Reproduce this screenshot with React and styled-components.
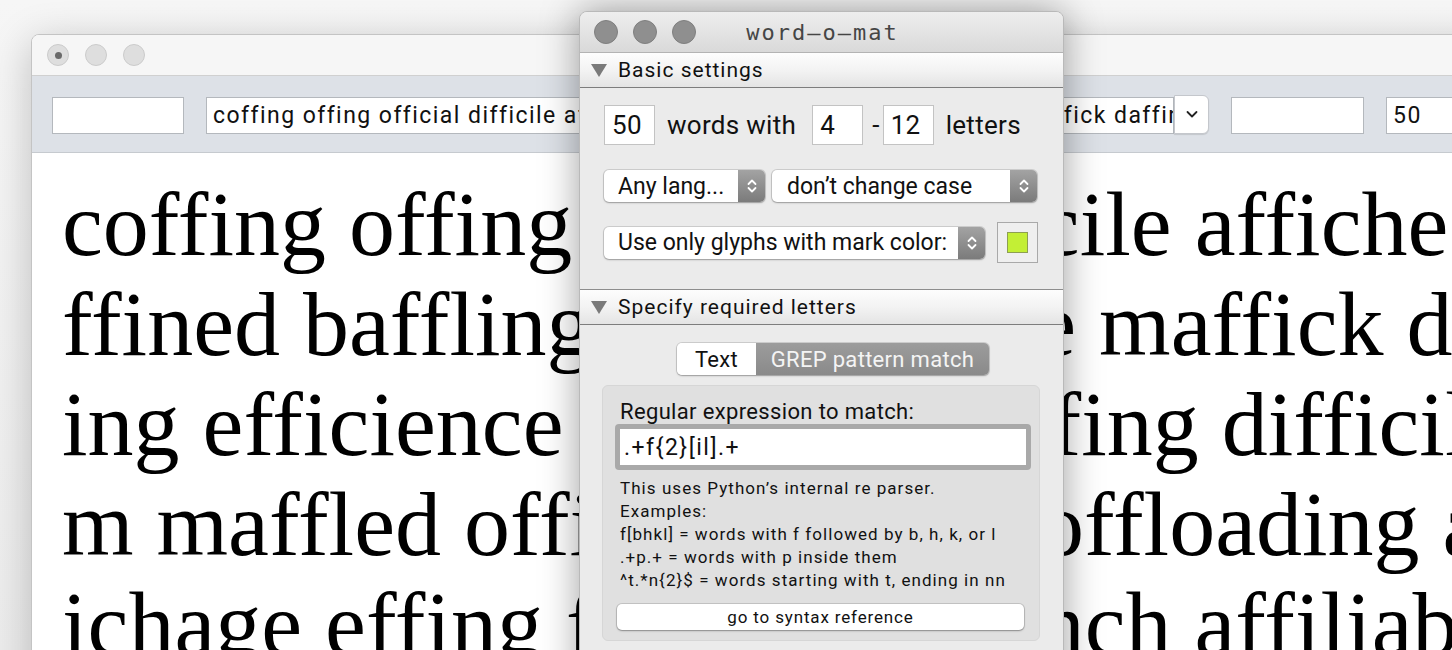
import React from "react";
import styled, { createGlobalStyle } from "styled-components";

const Global = createGlobalStyle`
  html, body {
    margin: 0;
    padding: 0;
    background: #f4f4f4;
    overflow: hidden;
  }
  #root {
    width: 1452px;
    height: 650px;
  }
`;

const uiFont = `"Roboto", "DejaVu Sans", sans-serif`;

const Desktop = styled.div`
  position: relative;
  width: 1452px;
  height: 650px;
  overflow: hidden;
  background: linear-gradient(#f6f6f6, #ececec);
`;

const MainWindow = styled.div`
  position: absolute;
  left: 31px;
  top: 34px;
  width: 1560px;
  height: 720px;
  background: #fff;
  border: 1px solid #c4c4c4;
  border-radius: 8px 8px 0 0;
  box-shadow: 0 8px 40px rgba(0, 0, 0, 0.22);
  overflow: hidden;
  display: flex;
  flex-direction: column;
`;

const TitleBar = styled.div`
  height: 41px;
  flex: none;
  background: #f6f6f6;
  display: flex;
  align-items: center;
  gap: ${(p) => p.$gap}px;
  padding-left: ${(p) => p.$pad}px;
  box-sizing: border-box;
  border-bottom: 1px solid ${(p) => p.$line};
  position: relative;
`;

const Light = styled.span`
  width: ${(p) => p.$size}px;
  height: ${(p) => p.$size}px;
  border-radius: 50%;
  background: ${(p) => p.$color};
  border: 1px solid ${(p) => p.$border};
  box-sizing: border-box;
  display: flex;
  align-items: center;
  justify-content: center;
`;

const Dot = styled.span`
  width: 7px;
  height: 7px;
  border-radius: 50%;
  background: #6a6a6a;
`;

const Toolbar = styled.div`
  height: 77px;
  flex: none;
  background: #dde1e7;
  border-bottom: 1px solid #c6cacf;
  display: flex;
  align-items: center;
  gap: 22px;
  padding: 2px 0 0 20px;
  box-sizing: border-box;
`;

const Field = styled.div`
  width: ${(p) => p.$w}px;
  height: 37px;
  flex: none;
  align-self: center;
  background: #fff;
  border: 1px solid #b4b8bd;
  box-sizing: border-box;
  font: 400 23px ${uiFont};
  letter-spacing: 1.45px;
  color: #111;
  display: flex;
  align-items: center;
  padding-left: 6px;
  white-space: nowrap;
  overflow: hidden;
`;

const Combo = styled.div`
  display: flex;
  flex: none;
  align-items: stretch;
  height: 37px;
`;

const ComboButton = styled.div`
  width: 33px;
  margin-top: -2px;
  background: #fff;
  border: 1px solid #c4c7cc;
  border-radius: 0 6px 6px 0;
  box-shadow: 0 1px 1px rgba(0, 0, 0, 0.12);
  display: flex;
  align-items: center;
  justify-content: center;
`;

const Preview = styled.div`
  padding: 21px 0 0 30px;
  font-family: "Liberation Serif", "Times New Roman", serif;
  font-size: 92px;
  line-height: 100px;
  color: #000;
`;

const Line = styled.div`
  white-space: pre;
`;

const Panel = styled.div`
  position: absolute;
  left: 579px;
  top: 11px;
  width: 483px;
  height: 700px;
  background: #ebebeb;
  border: 1px solid #b9b9b9;
  border-radius: 8px 8px 0 0;
  box-shadow: 0 0 38px rgba(0, 0, 0, 0.38);
  overflow: hidden;
  font-family: ${uiFont};
  color: #111;
`;

const PanelTitleBar = styled(TitleBar)`
  background: linear-gradient(#eeeeee, #d9d9d9);
`;

const PanelTitle = styled.div`
  position: absolute;
  left: 0;
  right: 0;
  top: 0;
  bottom: 0;
  display: flex;
  align-items: center;
  justify-content: center;
  font: 400 22px "DejaVu Sans Mono", "Liberation Mono", monospace;
  letter-spacing: 2px;
  color: #454545;
  padding-left: 2px;
`;

const SectionHeader = styled.div`
  height: 34px;
  background: linear-gradient(#fdfdfd, #f3f3f3 50%, #e4e4e4);
  border-top: ${(p) => (p.$first ? "none" : "1px solid #8d8d8d")};
  border-bottom: 1px solid #7d7d7d;
  display: flex;
  align-items: center;
  gap: 11px;
  padding-left: 11px;
  font-size: 21px;
  letter-spacing: 1px;
  color: #111;
`;

const Tri = styled.span`
  width: 0;
  height: 0;
  border-left: 8px solid transparent;
  border-right: 8px solid transparent;
  border-top: 13px solid #7a7a7a;
`;

const Section = styled.div`
  padding: ${(p) => p.$pad};
  display: flex;
  flex-direction: column;
  gap: ${(p) => p.$gap}px;
  align-items: ${(p) => p.$align || "stretch"};
`;

const Row = styled.div`
  display: flex;
  align-items: center;
  gap: ${(p) => p.$gap || 0}px;
  margin-top: ${(p) => p.$mt || 0}px;
`;

const NumBox = styled.div`
  width: 51px;
  height: 40px;
  flex: none;
  margin-left: ${(p) => p.$ml || 0}px;
  background: #fff;
  border: 1px solid #c3c3c3;
  box-sizing: border-box;
  font-size: 26px;
  letter-spacing: 0.3px;
  display: flex;
  align-items: center;
  padding-left: 7px;
`;

const Label = styled.span`
  font-size: 26px;
  letter-spacing: 0.3px;
  margin: 0 ${(p) => p.$mr || 0}px 0 ${(p) => p.$ml || 0}px;
  white-space: nowrap;
`;

const Popup = styled.div`
  width: ${(p) => p.$w}px;
  height: 32px;
  flex: none;
  background: #fff;
  border-radius: 5px;
  box-shadow: 0 0 0 1px rgba(0, 0, 0, 0.12), 0 1px 2px rgba(0, 0, 0, 0.25);
  display: flex;
  align-items: stretch;
  overflow: hidden;
  box-sizing: border-box;
`;

const PopupText = styled.div`
  flex: 1;
  display: flex;
  align-items: center;
  padding-left: ${(p) => p.$pad || 14}px;
  font-size: 23px;
  white-space: nowrap;
  overflow: hidden;
`;

const Stepper = styled.div`
  width: 27px;
  flex: none;
  background: linear-gradient(#a3a3a3, #7b7b7b);
  display: flex;
  align-items: center;
  justify-content: center;
`;

const Well = styled.div`
  width: 41px;
  height: 41px;
  border: 1px solid #a9a9a9;
  background: #efefef;
  box-sizing: border-box;
  display: flex;
  align-items: center;
  justify-content: center;
`;

const Swatch = styled.div`
  width: 21px;
  height: 21px;
  background: #c3ef35;
  border: 1px solid #8d9f52;
  box-sizing: border-box;
`;

const Segmented = styled.div`
  display: flex;
  height: 32px;
  margin-left: 24px;
  border-radius: 5px;
  overflow: hidden;
  box-shadow: 0 0 0 1px rgba(0, 0, 0, 0.12), 0 1px 2px rgba(0, 0, 0, 0.25);
`;

const Segment = styled.div`
  width: ${(p) => p.$w}px;
  display: flex;
  align-items: center;
  justify-content: center;
  font-size: 22px;
  letter-spacing: 0.3px;
  white-space: nowrap;
  color: ${(p) => (p.$on ? "#f4f4f4" : "#111")};
  background: ${(p) => (p.$on ? "linear-gradient(#9c9c9c, #8a8a8a)" : "#fff")};
`;

const Group = styled.div`
  align-self: stretch;
  background: #e0e0e0;
  border: 1px solid #d6d6d6;
  border-radius: 6px;
  padding: 14px 13px 10px 12px;
  display: flex;
  flex-direction: column;
`;

const GroupLabel = styled.div`
  font-size: 22px;
  line-height: 24px;
  letter-spacing: 0.35px;
  padding-left: 5px;
  white-space: nowrap;
`;

const RegexField = styled.div`
  height: 46px;
  flex: none;
  border-radius: 4px;
  background: #a9a9a9;
  padding: 5px;
  box-sizing: border-box;
  margin-right: -5px;
  display: flex;
`;

const RegexInner = styled.div`
  flex: 1;
  background: #fff;
  display: flex;
  align-items: center;
  padding-left: 4px;
  font-size: 23px;
  letter-spacing: 1.5px;
`;

const Help = styled.div`
  margin-top: 7px;
  padding-left: 5px;
  font-size: 17px;
  line-height: 23px;
  letter-spacing: 1.05px;
  white-space: nowrap;
`;

const Button = styled.div`
  margin: 12px 2px 0 2px;
  height: 26px;
  flex: none;
  background: #fff;
  border-radius: 5px;
  box-shadow: 0 0 0 1px rgba(0, 0, 0, 0.12), 0 1px 2px rgba(0, 0, 0, 0.3);
  display: flex;
  align-items: center;
  justify-content: center;
  font-size: 17px;
  letter-spacing: 0.85px;
`;

const UpDown = () => (
  <svg width="12" height="18" viewBox="0 0 12 18">
    <path d="M2.5 7 L6 3.5 L9.5 7 M2.5 11 L6 14.5 L9.5 11" fill="none" stroke="#fff" strokeWidth="1.8" strokeLinecap="round" strokeLinejoin="round" />
  </svg>
);

const Chevron = () => (
  <svg width="14" height="10" viewBox="0 0 14 10">
    <path d="M2.5 3 L7 7.5 L11.5 3" fill="none" stroke="#222" strokeWidth="1.8" strokeLinecap="round" strokeLinejoin="round" />
  </svg>
);

const lines = [
  "coffing offing official difficile affiche",
  "ffined baffling fiche affiche maffick daffing",
  "ing efficience difficile scoffing difficile",
  "m maffled offing chaffing offloading affiche",
  "ichage effing fetching staunch affiliable",
];

const toolbarText =
  "coffing offing official difficile affiche baffling efficient offing chiffon maffick daffing";

export default function App() {
  return (
    <Desktop>
      <Global />
      <MainWindow>
        <TitleBar $pad={15} $gap={16} $line="#d0d0d0">
          <Light $size={22} $color="#dedede" $border="#cbcbcb"><Dot /></Light>
          <Light $size={22} $color="#dedede" $border="#cbcbcb" />
          <Light $size={22} $color="#dedede" $border="#cbcbcb" />
        </TitleBar>
        <Toolbar>
          <Field $w={132} />
          <Combo>
            <Field $w={968}>{toolbarText}</Field>
            <ComboButton><Chevron /></ComboButton>
          </Combo>
          <Field $w={133} />
          <Field $w={133}>50</Field>
        </Toolbar>
        <Preview>
          {lines.map((l, i) => (
            <Line key={i}>{l}</Line>
          ))}
        </Preview>
      </MainWindow>

      <Panel>
        <PanelTitleBar $pad={14} $gap={15} $line="#b3b3b3">
          <Light $size={24} $color="#8f8f8f" $border="#7f7f7f" />
          <Light $size={24} $color="#8f8f8f" $border="#7f7f7f" />
          <Light $size={24} $color="#8f8f8f" $border="#7f7f7f" />
          <PanelTitle>word—o—mat</PanelTitle>
        </PanelTitleBar>

        <SectionHeader $first>
          <Tri />
          Basic settings
        </SectionHeader>
        <Section $pad="17px 24px 26px 24px" $gap={24}>
          <Row>
            <NumBox>50</NumBox>
            <Label $ml={12}>words with</Label>
            <NumBox $ml={16}>4</NumBox>
            <Label $ml={9} $mr={3}>-</Label>
            <NumBox>12</NumBox>
            <Label $ml={12}>letters</Label>
          </Row>
          <Row $gap={7} $mt={1}>
            <Popup $w={161}>
              <PopupText>Any lang...</PopupText>
              <Stepper><UpDown /></Stepper>
            </Popup>
            <Popup $w={265}>
              <PopupText $pad={15}>don’t change case</PopupText>
              <Stepper><UpDown /></Stepper>
            </Popup>
          </Row>
          <Row $gap={12} $mt={-4}>
            <Popup $w={381}>
              <PopupText>Use only glyphs with mark color:</PopupText>
              <Stepper><UpDown /></Stepper>
            </Popup>
            <Well><Swatch /></Well>
          </Row>
        </Section>

        <SectionHeader>
          <Tri />
          Specify required letters
        </SectionHeader>
        <Section $pad="18px 23px 0 22px" $gap={10} $align="center">
          <Segmented>
            <Segment $w={79}>Text</Segment>
            <Segment $w={233} $on>GREP pattern match</Segment>
          </Segmented>
          <Group>
            <GroupLabel>Regular expression to match:</GroupLabel>
            <RegexField>
              <RegexInner>.+f{"{"}2{"}"}[il].+</RegexInner>
            </RegexField>
            <Help>
              This uses Python’s internal re parser.<br />
              Examples:<br />
              f[bhkl] = words with f followed by b, h, k, or l<br />
              .+p.+ = words with p inside them<br />
              ^t.*n{"{"}2{"}"}$ = words starting with t, ending in nn
            </Help>
            <Button>go to syntax reference</Button>
          </Group>
        </Section>
      </Panel>
    </Desktop>
  );
}
